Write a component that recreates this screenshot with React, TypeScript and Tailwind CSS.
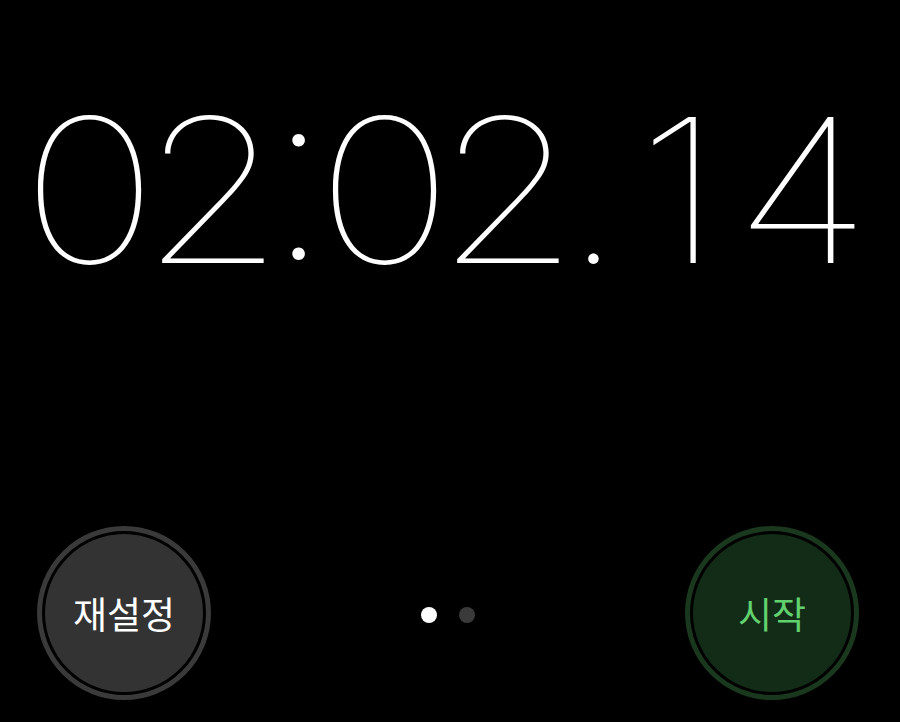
const TIME = ["0", "2", ":", "0", "2", ".", "1", "4"];

function RoundButton({
  label,
  ring,
  fill,
  text,
}: {
  label: string;
  ring: string;
  fill: string;
  text: string;
}) {
  return (
    <div className={`h-[174px] w-[174px] rounded-full border-[5px] p-[3px] ${ring}`}>
      <div
        className={`flex h-full w-full items-center justify-center rounded-full pt-[2px] text-[37px] ${fill} ${text}`}
        style={{ fontFamily: '"Noto Sans CJK KR", "Noto Sans", sans-serif' }}
      >
        {label}
      </div>
    </div>
  );
}

export default function App() {
  return (
    <div className="flex h-[722px] w-[900px] flex-col overflow-hidden bg-black">
      <div
        className="flex pl-[28px] pt-[89px] text-[201px] font-[140] leading-none text-white"
        style={{ fontFamily: 'Inter, "Open Sans", sans-serif' }}
      >
        {TIME.map((ch, i) => {
          if (ch === ":") {
            return (
              <span key={i} className="flex w-[49px] -translate-y-[19px] scale-[1.2] justify-center">
                {ch}
              </span>
            );
          }
          if (ch === ".") {
            return (
              <span key={i} className="flex w-[49px] justify-center">
                {ch}
              </span>
            );
          }
          return (
            <span key={i} className="flex w-[123px] scale-x-[1.15] justify-center">
              {ch}
            </span>
          );
        })}
      </div>

      <div className="mt-auto flex items-center justify-between pb-[22px] pl-[37px] pr-[41px]">
        <RoundButton label="재설정" ring="border-[#3a3a3a]" fill="bg-[#333333]" text="text-white" />
        <div className="flex items-center gap-[22px] pt-[3px]">
          <span className="h-[16px] w-[16px] rounded-full bg-white" />
          <span className="h-[16px] w-[16px] rounded-full bg-[#3a3a3a]" />
        </div>
        <RoundButton label="시작" ring="border-[#19381d]" fill="bg-[#132c17]" text="text-[#62d26f]" />
      </div>
    </div>
  );
}
